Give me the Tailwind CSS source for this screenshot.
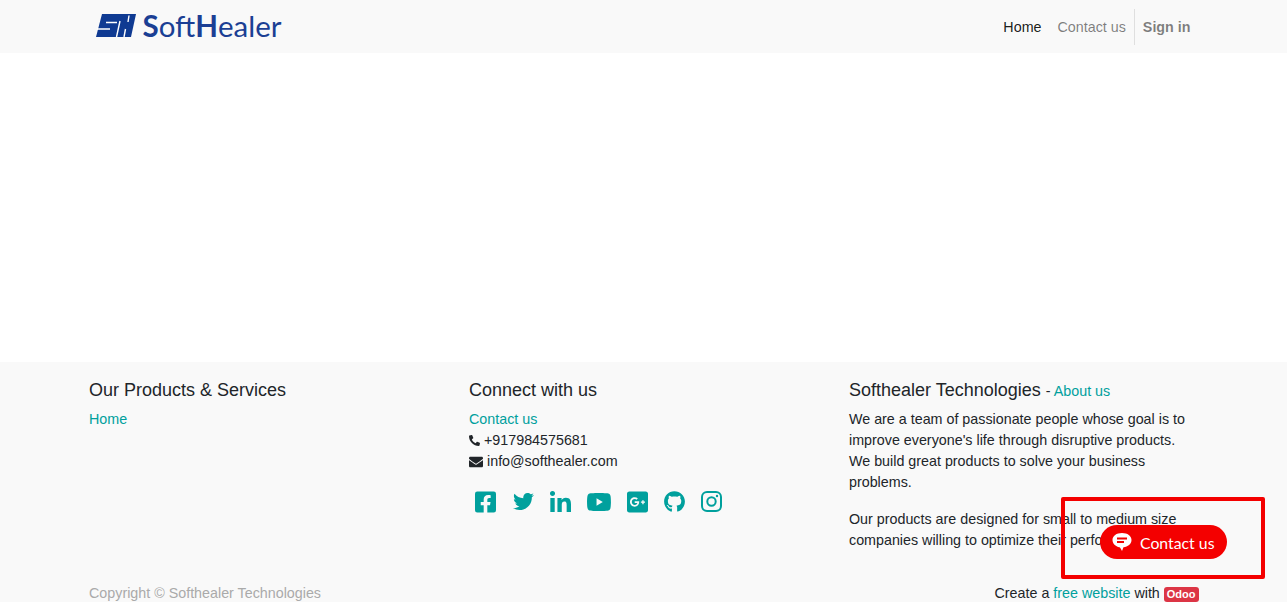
<!DOCTYPE html>
<html lang="en"><head><meta charset="utf-8"><title>Softhealer</title>
<script src="https://cdn.jsdelivr.net/npm/@tailwindcss/browser@4"></script></head>
<body class="bg-white font-['Liberation_Sans',Arial,sans-serif] text-[14.3px] leading-[21px] text-[#212529] h-[602px] overflow-hidden relative flex flex-col">
<header class="h-[53px] bg-[#f9f9f9] shrink-0">
  <div class="w-[1140px] mx-auto px-[15px] h-full flex items-center justify-between">
    <a class="flex items-center ml-[7px] mt-[-1px] text-[#1b3f94] font-['Lato',sans-serif] text-[29.5px] leading-none">
      <svg class="w-[40px] h-[24px] mr-[7px]" viewBox="0 0 40 24"><polygon points="6,0 40,0 35,23 0,23" fill="#0f3a92"/><path d="M10 8.500H21M1 15H14M24 7L20.500 23M33 1.500L32 8M29.500 15L28 23" stroke="#fff" stroke-width="1.400" fill="none"/></svg>
      <span><span class="font-bold">S</span>oft<span class="font-bold">H</span>ealer</span>
    </a>
    <nav class="flex items-center h-[37px] pt-[1px]">
      <a class="px-2 text-black/90">Home</a>
      <a class="px-2 text-black/50">Contact us</a>
      <a class="pl-2 pr-2 h-full mt-[-1px] pt-[1px] flex items-center border-l border-black/10 font-bold text-black/50">Sign in</a>
    </nav>
  </div>
</header>
<main class="flex-1"></main>
<footer class="h-[240px] bg-[#f9f9f9] shrink-0">
  <div class="w-[1140px] mx-auto pt-[17px]">
    <div class="grid grid-cols-3 h-[199px]">
      <div class="pl-[15.5px] pr-[14.5px]">
        <h5 class="text-[18px] leading-[22px] h-[22px] mb-2">Our Products &amp; Services</h5>
        <a class="text-[#00a09d]">Home</a>
      </div>
      <div class="pl-[15.5px] pr-[14.5px]">
        <h5 class="text-[18px] leading-[22px] h-[22px] mb-2">Connect with us</h5>
        <a class="block text-[#00a09d]">Contact us</a>
        <div class="flex items-center gap-[4px]">
          <svg class="w-[11px] h-[11px]" viewBox="0 0 512 512" fill="currentColor"><path transform="matrix(-1 0 0 1 512 0)" d="M493.4 24.6l-104-24c-11.3-2.6-22.9 3.3-27.5 13.9l-48 112c-4.2 9.8-1.4 21.3 6.9 28l60.6 49.6c-36 76.7-98.9 140.5-177.2 177.2l-49.6-60.6c-6.8-8.3-18.2-11.1-28-6.9l-112 48C3.9 366.5-2 378.1.6 389.4l24 104C27.1 504.2 36.7 512 48 512c256.1 0 464-207.5 464-464 0-11.2-7.7-20.9-18.6-23.4z"/></svg>
          <span>+917984575681</span>
        </div>
        <div class="flex items-center gap-[4px]">
          <svg class="w-[14px] h-[14px]" viewBox="0 0 512 512" fill="currentColor"><path d="M502.3 190.8c3.9-3.1 9.7-.2 9.7 4.7V400c0 26.5-21.5 48-48 48H48c-26.5 0-48-21.5-48-48V195.6c0-5 5.7-7.8 9.7-4.7 22.4 17.4 52.1 39.5 154.1 113.6 21.1 15.4 56.7 47.8 92.2 47.6 35.7.3 72-32.8 92.3-47.6 102-74.1 131.6-96.3 154-113.7zM256 320c23.2.4 56.6-29.2 73.4-41.4 132.7-96.3 142.8-104.7 173.4-128.7 5.8-4.5 9.2-11.5 9.2-18.9v-19c0-26.5-21.5-48-48-48H48C21.5 64 0 85.5 0 112v19c0 7.4 3.4 14.3 9.2 18.9 30.6 23.9 40.7 32.4 173.4 128.7 16.8 12.2 50.2 41.8 73.4 41.4z"/></svg>
          <span>info@softhealer.com</span>
        </div>
        <div class="flex items-center gap-4 pl-[6px] mt-[19px] h-[21px] text-[#00a09d]">
          <svg class="w-[21px] h-[24px]" viewBox="0 0 448 512" fill="currentColor"><path d="M400 32H48A48 48 0 0 0 0 80v352a48 48 0 0 0 48 48h137.25V327.69h-63V256h63v-54.64c0-62.15 37-96.48 93.67-96.48 27.14 0 55.52 4.84 55.52 4.84v61h-31.27c-30.81 0-40.42 19.12-40.42 38.73V256h68.78l-11 71.69h-57.78V480H400a48 48 0 0 0 48-48V80a48 48 0 0 0-48-48z"/></svg>
          <svg class="w-[21px] h-[21px] ml-[1px]" viewBox="0 0 512 512" fill="currentColor"><path d="M459.37 151.716c.325 4.548.325 9.097.325 13.645 0 138.72-105.583 298.558-298.558 298.558-59.452 0-114.68-17.219-161.137-47.106 8.447.974 16.568 1.299 25.34 1.299 49.055 0 94.213-16.568 130.274-44.832-46.132-.975-84.792-31.188-98.112-72.772 6.498.974 12.995 1.624 19.818 1.624 9.421 0 18.843-1.3 27.614-3.573-48.081-9.747-84.143-51.98-84.143-102.985v-1.299c13.969 7.797 30.214 12.67 47.431 13.319-28.264-18.843-46.781-51.005-46.781-87.391 0-19.492 5.197-37.36 14.294-52.954 51.655 63.675 129.3 105.258 216.365 109.807-1.624-7.797-2.599-15.918-2.599-24.04 0-57.828 46.782-104.934 104.934-104.934 30.213 0 57.502 12.67 76.67 33.137 23.715-4.548 46.456-13.32 66.599-25.34-7.798 24.366-24.366 44.833-46.132 57.827 21.117-2.273 41.584-8.122 60.426-16.243-14.292 20.791-32.161 39.308-52.628 54.253z"/></svg>
          <svg class="w-[21px] h-[21px]" viewBox="0 0 448 448" fill="currentColor"><path d="M100.28 448H7.4V148.9h92.88zM53.79 108.1C24.09 108.1 0 83.5 0 53.8a53.79 53.79 0 0 1 107.58 0c0 29.7-24.1 54.3-53.79 54.3zM447.9 448h-92.68V302.4c0-34.7-.7-79.2-48.29-79.2-48.29 0-55.69 37.7-55.69 76.7V448h-92.78V148.9h89.08v40.8h1.3c12.4-23.5 42.69-48.3 87.88-48.3 94 0 111.28 61.9 111.28 142.3V448z"/></svg>
          <svg class="w-[24px] h-[24px]" viewBox="14 0 548 512" preserveAspectRatio="none" fill="currentColor"><path d="M549.655 124.083c-6.281-23.65-24.787-42.276-48.284-48.597C458.781 64 288 64 288 64S117.22 64 74.629 75.486c-23.497 6.322-42.003 24.947-48.284 48.597-11.412 42.867-11.412 132.305-11.412 132.305s0 89.438 11.412 132.305c6.281 23.65 24.787 41.5 48.284 47.821C117.22 448 288 448 288 448s170.78 0 213.371-11.486c23.497-6.321 42.003-24.171 48.284-47.821 11.412-42.867 11.412-132.305 11.412-132.305s0-89.438-11.412-132.305zm-317.51 213.508V175.185l142.739 81.205-142.739 81.201z"/></svg>
          <svg class="w-[21px] h-[24px]" viewBox="0 0 448 512" fill="currentColor"><path d="M400 32H48C21.5 32 0 53.5 0 80v352c0 26.5 21.5 48 48 48h352c26.5 0 48-21.5 48-48V80c0-26.5-21.5-48-48-48zM164 356c-55.3 0-100-44.7-100-100s44.7-100 100-100c27 0 49.5 9.8 67 26.2l-27.1 26.1c-7.4-7.1-20.3-15.4-39.8-15.4-34.1 0-61.9 28.2-61.9 63.2 0 34.9 27.8 63.2 61.9 63.2 39.6 0 54.4-28.5 56.8-43.1H164v-34.4h94.4c1 5 1.6 10.1 1.6 16.6 0 57.1-38.3 97.6-96 97.6zm220-81.8h-29v29h-29.2v-29h-29V245h29v-29H355v29h29v29.2z"/></svg>
          <svg class="w-[21px] h-[21px]" viewBox="0 0 496 500" fill="currentColor"><path d="M244.8 8C106.1 8 0 113.3 0 252c0 110.9 69.8 205.8 169.5 239.2 12.8 2.3 17.3-5.6 17.3-12.1 0-6.2-.3-40.4-.3-61.4 0 0-70 15-84.7-29.8 0 0-11.4-29.1-27.8-36.6 0 0-22.9-15.7 1.6-15.4 0 0 24.9 2 38.6 25.8 21.9 38.6 58.6 27.5 72.9 20.9 2.3-16 8.8-27.1 16-33.7-55.9-6.2-112.3-14.3-112.3-110.5 0-27.5 7.6-41.3 23.6-58.9-2.6-6.5-11.1-33.3 2.6-67.9 20.9-6.5 69 27 69 27 20-5.6 41.5-8.5 62.8-8.5s42.8 2.9 62.8 8.5c0 0 48.1-33.6 69-27 13.7 34.7 5.2 61.4 2.6 67.9 16 17.7 25.8 31.5 25.8 58.9 0 96.5-58.9 104.2-114.8 110.5 9.2 7.9 17 22.9 17 46.4 0 33.7-.3 75.4-.3 83.6 0 6.5 4.6 14.4 17.3 12.1C428.2 457.8 496 362.9 496 252 496 113.3 383.5 8 244.8 8z"/></svg>
          <svg class="w-[21px] h-[21px]" viewBox="0 0 21 21" fill="none" stroke="currentColor" stroke-width="2"><rect x="1" y="1" width="19" height="19" rx="5"/><circle cx="10.5" cy="10.5" r="4.2"/><circle cx="16" cy="5" r="1.2" fill="currentColor" stroke="none"/></svg>
        </div>
      </div>
      <div class="pl-[15.5px] pr-[14.5px]">
        <h5 class="text-[18px] leading-[22px] h-[22px] mb-2">Softhealer Technologies <span class="text-[14.3px]">- <a class="text-[#00a09d]">About us</a></span></h5>
        <p class="mb-4">We are a team of passionate people whose goal is to improve everyone's life through disruptive products. We build great products to solve your business problems.</p>
        <p>Our products are designed for small to medium size companies willing to optimize their performance.</p>
      </div>
    </div>
    <div class="flex justify-between items-center mt-[5px] pl-[15.5px] pr-[15px]">
      <span class="text-[#aaa]">Copyright © Softhealer Technologies</span>
      <span class="flex items-center">Create a&nbsp;<a class="text-[#00a09d]">free website</a>&nbsp;with&nbsp;<span class="bg-[#dc3545] text-white font-bold text-[11px] leading-none px-[3px] py-[2px] mt-[2px] rounded-[3px]">Odoo</span></span>
    </div>
  </div>
</footer>
<div class="absolute left-[1100px] top-[525px] w-[127px] h-[34px] rounded-[17px] bg-[#f40000] text-white flex items-center font-['Lato',sans-serif] text-[15.8px] pl-[12px] gap-[8px] pt-[1px]">
  <svg class="w-[20px] h-[20px] mt-[-2px]" viewBox="0 0 20 20"><path d="M10 1C4.500 1 .5 3.800.5 8c0 3.600 3 6.500 7 7.300 1 .5 1.600 2 2.500 3.700 .6-1.200 1-3 1.500-3.700C15.800 14.800 19.500 12 19.500 8 19.500 3.800 15.500 1 10 1z" fill="#fff"/><path d="M5 6.500h10M5 10h7" stroke="#f40000" stroke-width="2"/></svg>
  <span>Contact us</span>
</div>
<div class="absolute left-[1061px] top-[497px] w-[204px] h-[82px] border-4 border-[#f40000] rounded-[2px]"></div>
</body></html>
